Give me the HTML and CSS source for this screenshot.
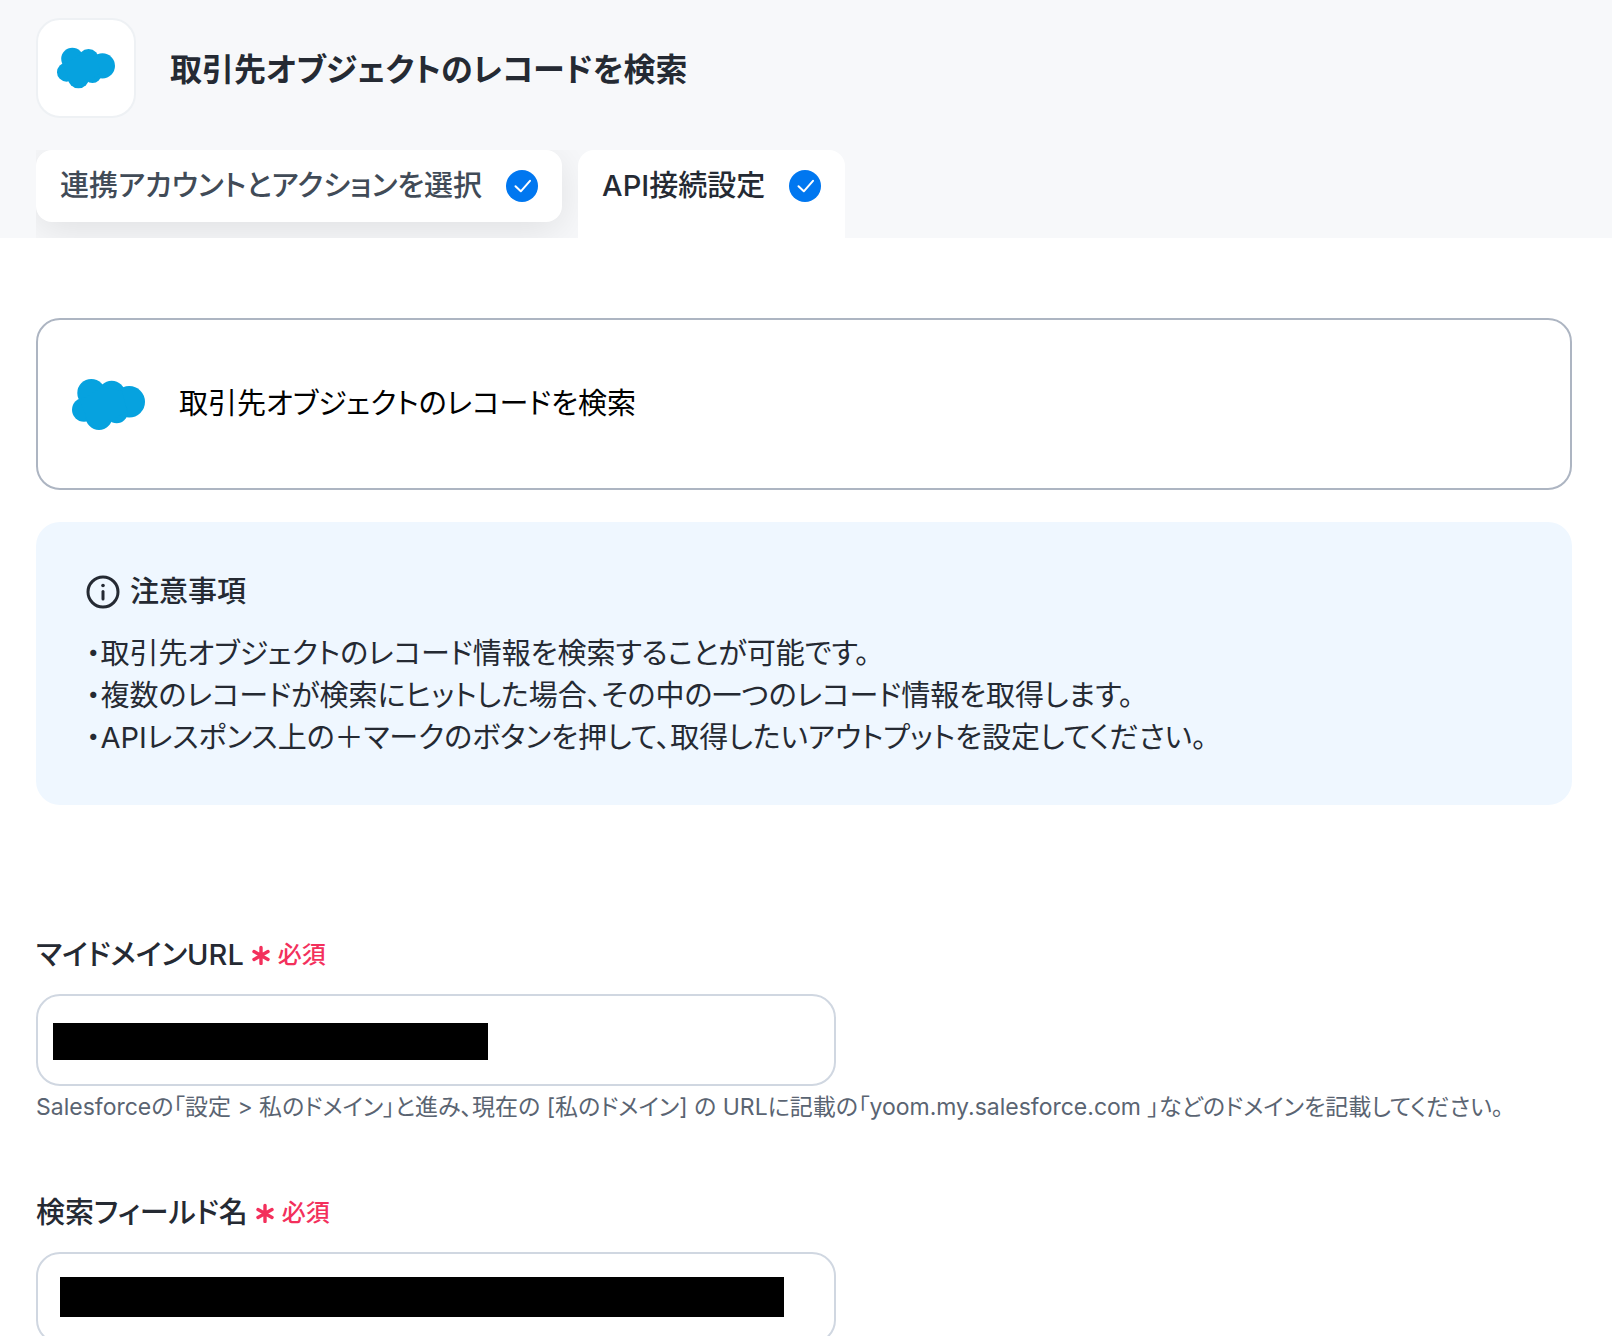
FILE: index.html
```html
<!DOCTYPE html>
<html lang="ja">
<head>
<meta charset="utf-8">
<meta name="viewport" content="width=device-width, initial-scale=1">
<title>取引先オブジェクトのレコードを検索</title>
<link rel="stylesheet" href="styles.css">
</head>
<body>
<svg class="sprite" aria-hidden="true">
  <symbol id="cloud" viewBox="0 0 73 51">
    <circle cx="19.300" cy="14" r="14"/>
    <circle cx="39.700" cy="15" r="13.300"/>
    <circle cx="57.200" cy="22.800" r="15.800"/>
    <circle cx="12" cy="30.700" r="12"/>
    <circle cx="27" cy="37.700" r="13.300"/>
    <circle cx="44.700" cy="33.300" r="11"/>
    <path d="M8 22 30 8 50 12 55 32 42 40 15 40Z"/>
  </symbol>
  <symbol id="check" viewBox="0 0 32 32">
    <circle cx="16" cy="16" r="16" fill="#0077f0"/>
    <path d="M9.500 16.200 14.800 21.300 24 10.800" fill="none" stroke="#fff" stroke-width="2" stroke-linecap="round" stroke-linejoin="round"/>
  </symbol>
  <symbol id="asterisk" viewBox="0 0 18 20">
    <path d="M9 2.500V18.500M2 6.500 16 14.500M16 6.500 2 14.500" fill="none" stroke="#f3305c" stroke-width="3.400" stroke-linecap="round"/>
  </symbol>
</svg>

<header class="header">
  <div class="heading">
    <span class="app-icon"><svg class="app-cloud"><use href="#cloud"/></svg></span>
    <h1 class="title">取引先オブジェクトのレコードを検索</h1>
  </div>
  <div class="tabs" role="tablist">
    <button class="tab" type="button" role="tab" aria-selected="false">連携アカウントとアクションを選択<svg class="check"><use href="#check"/></svg></button>
    <button class="tab tab-active" type="button" role="tab" aria-selected="true">API接続設定<svg class="check"><use href="#check"/></svg></button>
  </div>
</header>

<main class="main">
  <section class="action-card">
    <svg class="card-cloud"><use href="#cloud"/></svg>
    <p class="action-name">取引先オブジェクトのレコードを検索</p>
  </section>

  <section class="notice">
    <h2 class="notice-title">
      <svg class="info" viewBox="0 0 34 34" fill="none" stroke="#252a33" stroke-width="3"><circle cx="17" cy="17" r="15"/><path d="M17 16.500V24" stroke-linecap="round"/><circle cx="17" cy="10.500" r="1.800" fill="#252a33" stroke="none"/></svg>
      注意事項
    </h2>
    <p class="notice-text">・取引先オブジェクトのレコード情報を検索することが可能です。<br>・複数のレコードが検索にヒットした場合、その中の一つのレコード情報を取得します。<br>・APIレスポンス上の＋マークのボタンを押して、取得したいアウトプットを設定してください。</p>
  </section>

  <form class="form">
    <div class="field">
      <label class="label" for="domain">マイドメインURL<span class="required"><svg class="asterisk"><use href="#asterisk"/></svg>必須</span></label>
      <div class="control">
        <input class="input" id="domain" type="text" aria-describedby="domain-help">
        <span class="mask mask-domain"></span>
      </div>
      <p class="help" id="domain-help">Salesforceの「設定 &gt; 私のドメイン」と進み、現在の [私のドメイン] の URLに記載の「yoom.my.salesforce.com 」などのドメインを記載してください。</p>
    </div>
    <div class="field">
      <label class="label" for="field-name">検索フィールド名<span class="required"><svg class="asterisk"><use href="#asterisk"/></svg>必須</span></label>
      <div class="control">
        <input class="input" id="field-name" type="text">
        <span class="mask mask-field"></span>
      </div>
    </div>
  </form>
</main>
</body>
</html>
```

FILE: styles.css
```css
* {
  box-sizing: border-box;
}

html {
  overflow: hidden;
}

body {
  margin: 0;
  background: #fff;
  color: #252a33;
  font-family: Inter, "Noto Sans CJK JP", sans-serif;
  font-feature-settings: "palt";
  font-size: 29px;
  line-height: 42px;
}

h1,
h2,
p {
  margin: 0;
}

.sprite {
  position: absolute;
  width: 0;
  height: 0;
}

.header {
  padding: 18px 36px 0;
  background: #f7f8fa;
}

.heading {
  display: flex;
  align-items: center;
  gap: 34px;
}

.app-icon {
  display: flex;
  align-items: center;
  justify-content: center;
  width: 100px;
  height: 100px;
  border: 2px solid #eef1f4;
  border-radius: 24px;
  background: #fff;
}

.app-cloud {
  width: 58px;
  height: 42px;
  fill: #06a2df;
}

.title {
  padding-top: 4px;
  font-size: 32px;
  font-weight: 700;
}

.tabs {
  display: flex;
  gap: 16px;
  align-items: flex-start;
  width: fit-content;
  margin-top: 32px;
  overflow: hidden;
}

.tab {
  display: flex;
  gap: 24px;
  align-items: center;
  height: 72px;
  padding: 0 24px;
  border: 0;
  border-radius: 16px;
  background: #fff;
  box-shadow: 0 8px 40px rgba(0, 0, 0, 0.1);
  color: #414b57;
  font: inherit;
  font-feature-settings: inherit;
  font-weight: 500;
}

.tab-active {
  height: 88px;
  padding-bottom: 16px;
  border-radius: 16px 16px 0 0;
  box-shadow: none;
  color: #252a33;
}

.check {
  width: 32px;
  height: 32px;
}

.main {
  padding: 80px 40px 0 36px;
}

.action-card {
  display: flex;
  gap: 34px;
  align-items: center;
  min-height: 172px;
  padding: 0 34px;
  border: 2px solid #adb5c2;
  border-radius: 24px;
}

.card-cloud {
  width: 73px;
  height: 51px;
  fill: #06a2df;
}

.action-name {
  color: #000;
}

.notice {
  margin-top: 32px;
  padding: 49px 50px 46px;
  border-radius: 24px;
  background: #eff7ff;
}

.notice-title {
  display: flex;
  gap: 10px;
  align-items: center;
  margin-bottom: 20px;
  font-size: 29px;
  font-weight: 500;
}

.info {
  width: 34px;
  height: 34px;
}

.form {
  display: grid;
  gap: 64px;
  margin-top: 129px;
}

.label {
  display: flex;
  gap: 8px;
  align-items: center;
  margin-bottom: 18px;
  font-weight: 500;
}

.required {
  display: flex;
  gap: 8px;
  align-items: center;
  color: #f3305c;
  font-size: 24px;
}

.asterisk {
  width: 18px;
  height: 20px;
}

.control {
  position: relative;
  max-width: 800px;
}

.input {
  display: block;
  width: 100%;
  height: 92px;
  padding: 0 24px;
  border: 2px solid #d0d7e1;
  border-radius: 24px;
  background: #fff;
  color: inherit;
  font: inherit;
}

.mask {
  position: absolute;
  background: #000;
}

.mask-domain {
  top: 29px;
  left: 17px;
  width: 435px;
  height: 37px;
}

.mask-field {
  top: 25px;
  left: 24px;
  width: 724px;
  height: 40px;
}

.help {
  color: #5a6472;
  font-size: 23px;
}
```
